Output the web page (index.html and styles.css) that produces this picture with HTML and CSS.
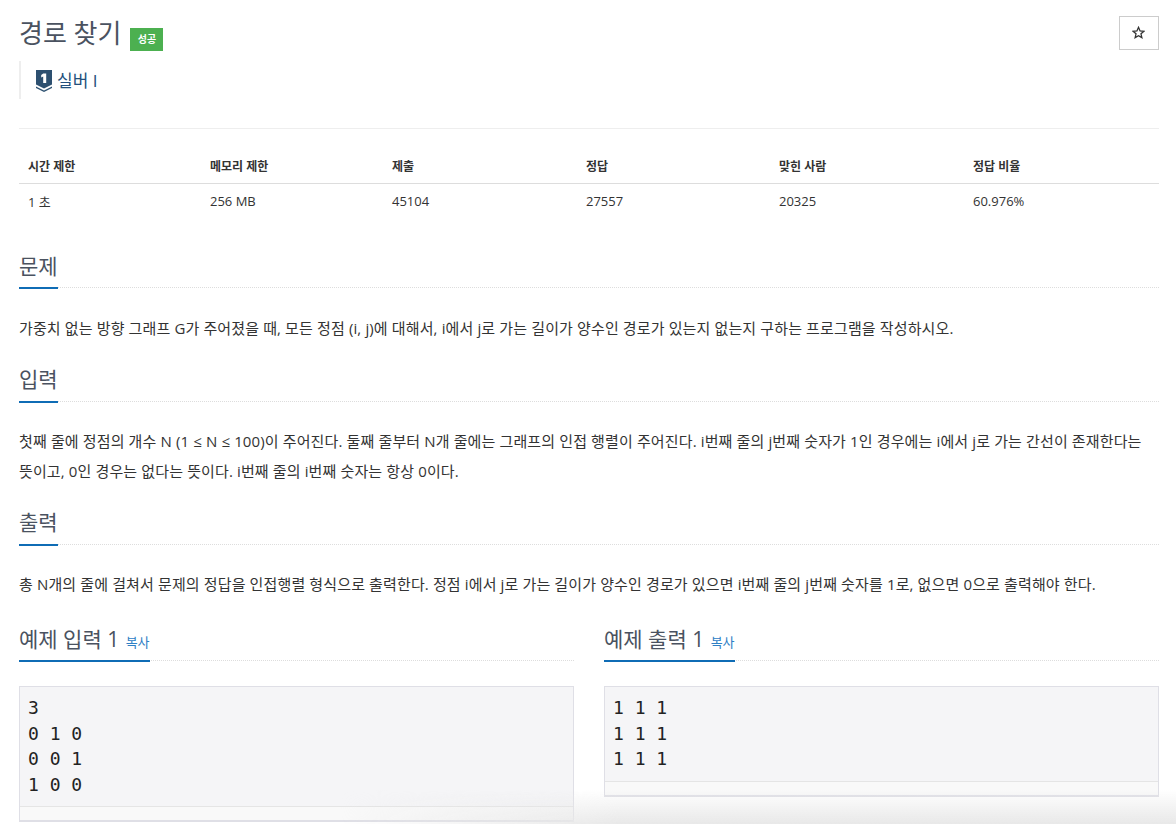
FILE: index.html
```html
<!DOCTYPE html>
<html lang="ko">
<head>
<meta charset="utf-8">
<title>경로 찾기</title>
<link rel="stylesheet" href="styles.css">
</head>
<body>
<main class="page">
  <header class="title-row">
    <div class="title-main">
      <h1 class="title">경로 찾기</h1>
      <span class="badge">성공</span>
    </div>
    <button class="star-btn" aria-label="즐겨찾기">
      <svg class="star" width="13" height="13" viewBox="0 0 24 24" fill="none" stroke="#333" stroke-width="2.4"><path d="M12 2.500l2.900 6.600 7.100.7-5.400 4.700 1.600 7-6.200-3.700-6.200 3.700 1.600-7L2 9.800l7.100-.7z"/></svg>
    </button>
  </header>
  <div class="tier">
    <svg class="tier-icon" width="16" height="22" viewBox="0 0 16 22"><path fill="#2d5070" d="M0 0h16v14.500l-8 4-8-4z"/><path fill="#2d5070" d="M0 16.500l8 4 8-4V18l-8 4-8-4z"/><path fill="#fff" d="M7.200 3.500h3V13h-3V6.600l-2 .8V5z"/></svg>
    <span class="tier-name">실버 I</span>
  </div>
  <hr class="rule">
  <table class="info">
    <thead>
      <tr><th class="c1">시간 제한</th><th class="c2">메모리 제한</th><th class="c3">제출</th><th class="c4">정답</th><th class="c5">맞힌 사람</th><th>정답 비율</th></tr>
    </thead>
    <tbody>
      <tr><td>1 초</td><td>256 MB</td><td>45104</td><td>27557</td><td>20325</td><td>60.976%</td></tr>
    </tbody>
  </table>

  <section class="block first">
    <div class="headline"><h2>문제</h2></div>
    <p>가중치 없는 방향 그래프 G가 주어졌을 때, 모든 정점 (i, j)에 대해서, i에서 j로 가는 길이가 양수인 경로가 있는지 없는지 구하는 프로그램을 작성하시오.</p>
  </section>
  <section class="block">
    <div class="headline"><h2>입력</h2></div>
    <p>첫째 줄에 정점의 개수 N (1 ≤ N ≤ 100)이 주어진다. 둘째 줄부터 N개 줄에는 그래프의 인접 행렬이 주어진다. i번째 줄의 j번째 숫자가 1인 경우에는 i에서 j로 가는 간선이 존재한다는 뜻이고, 0인 경우는 없다는 뜻이다. i번째 줄의 i번째 숫자는 항상 0이다.</p>
  </section>
  <section class="block">
    <div class="headline"><h2>출력</h2></div>
    <p>총 N개의 줄에 걸쳐서 문제의 정답을 인접행렬 형식으로 출력한다. 정점 i에서 j로 가는 길이가 양수인 경로가 있으면 i번째 줄의 j번째 숫자를 1로, 없으면 0으로 출력해야 한다.</p>
  </section>

  <div class="samples">
    <section class="sample">
      <div class="headline"><h2>예제 입력 1 <a class="copy">복사</a></h2></div>
      <div class="sample-box"><pre>3
0 1 0
0 0 1
1 0 0</pre><div class="scrollbar"></div></div>
    </section>
    <section class="sample">
      <div class="headline"><h2>예제 출력 1 <a class="copy">복사</a></h2></div>
      <div class="sample-box"><pre>1 1 1
1 1 1
1 1 1</pre><div class="scrollbar"></div></div>
    </section>
  </div>
</main>
<div class="bottom-fade"></div>
</body>
</html>
```
FILE: styles.css
```css
* { box-sizing: border-box; }
html, body { margin: 0; height: 100%; overflow: hidden; background: #fff; }
body {
  font-family: "Open Sans", "Noto Sans CJK KR", sans-serif;
  font-size: 14px;
  color: #333;
  position: relative;
}
.page { padding: 15px 17px 0 19px; }

.title-row { display: flex; justify-content: space-between; align-items: flex-start; height: 46px; }
.title-main { display: flex; align-items: flex-start; gap: 9px; }
.title { margin: 0; font-size: 26px; font-weight: 400; line-height: 36px; color: #4a5260; }
.badge {
  margin-top: 13px;
  width: 33px; height: 23px;
  background: #4cb050; color: #fff;
  font-size: 10px; font-weight: 700; line-height: 23px; text-align: center;
}
.star-btn {
  width: 40px; height: 34px; padding: 0 1px 1px 0; margin-top: 1px;
  background: #fff; border: 1px solid #ccc;
  display: flex; align-items: center; justify-content: center;
}

.tier {
  display: flex; align-items: center; gap: 5px;
  height: 38px;
  border-left: 2px solid #eee;
  padding-left: 15px;
}
.tier-icon { margin-top: 1px; }
.tier-name { font-size: 17px; line-height: 24px; margin-top: 2px; color: #24507c; }

.rule { margin: 29px 0 0; border: 0; border-top: 1px solid #eee; }

.info { width: 1140px; border-collapse: collapse; margin-top: 20px; table-layout: fixed; }
.info th, .info td { text-align: left; padding: 0 9px; }
.info th { height: 34px; font-size: 12px; font-weight: 700; color: #333; border-bottom: 1px solid #ddd; }
.info td { height: 36px; font-size: 13px; color: #333; }
.c1, .c2 { width: 182px; }
.c3 { width: 194px; }
.c4 { width: 193px; }
.c5 { width: 194px; }

.block { margin-top: 22px; }
.block.first { margin-top: 32px; }
.headline { border-bottom: 1px dotted #ddd; height: 37px; }
.headline h2 {
  display: inline-block; margin: 0; height: 38px;
  font-size: 21px; font-weight: 400; line-height: 28px; color: #4a5260;
  border-bottom: 2px solid #0f6cb5;
}
.block.first .headline h2 { line-height: 30px; }
.block p { margin: 0; padding-top: 24px; font-size: 15px; letter-spacing: .13px; line-height: 30px; color: #333; }
.block.first p { padding-top: 25px; }

.samples { display: grid; grid-template-columns: 555px 555px; gap: 30px; margin-top: 25px; }
.samples .headline h2 { line-height: 30px; }
.copy { font-size: 13px; color: #2f80c5; margin-left: 1px; }
.sample-box { margin-top: 25px; background: #f5f5f7; border: 1px solid #dfdfe6; border-bottom-width: 2px; }
.sample-box pre {
  margin: 0; padding: 8px 8px 9px;
  font-family: "DejaVu Sans Mono", monospace;
  font-size: 18px; line-height: 25.500px; color: #222;
}
.scrollbar { height: 14px; background: #f9f9f9; border-top: 1px solid #e5e5e5; }

.bottom-fade {
  position: absolute; left: 0; right: 0; bottom: 0; height: 34px;
  background: linear-gradient(to bottom, rgba(232,232,232,0), rgba(232,232,232,1));
  -webkit-mask-image: linear-gradient(to right, transparent 340px, #000 620px);
  mask-image: linear-gradient(to right, transparent 340px, #000 620px);
}
```
